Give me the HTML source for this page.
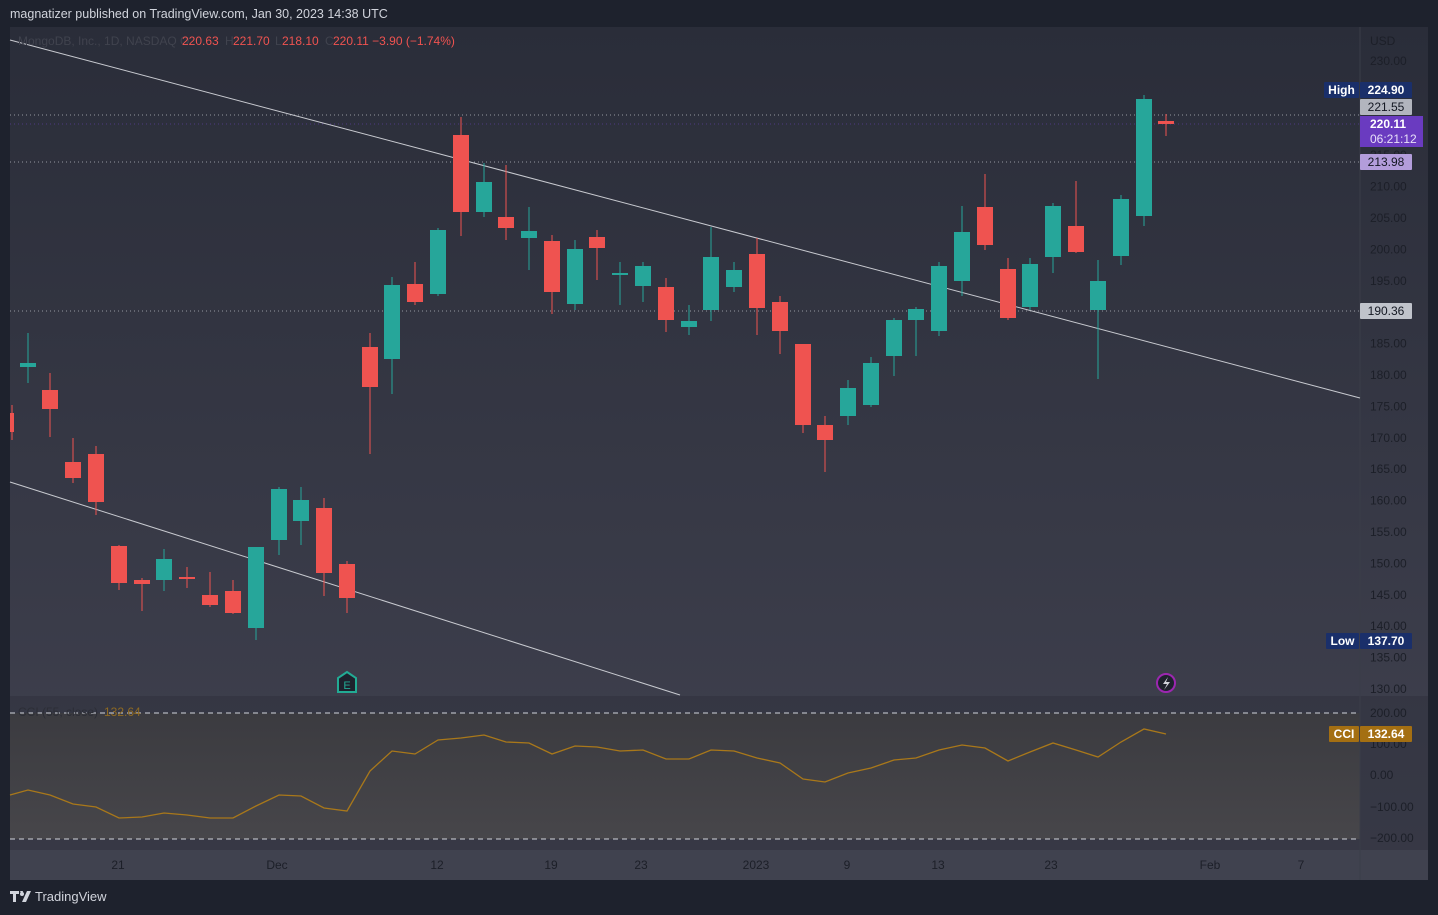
<!DOCTYPE html>
<html><head><meta charset="utf-8"><style>
html,body{margin:0;padding:0;background:#1e222d;width:1438px;height:915px;overflow:hidden;font-family:"Liberation Sans",sans-serif}
#top{position:absolute;left:10px;top:7px;color:#d1d4dc;font-size:12.5px}
#bot{position:absolute;left:10px;top:889px;color:#d1d4dc;font-size:13px;display:flex;align-items:center;gap:3px}
svg{position:absolute;left:0;top:0}
</style></head><body>
<div id="top">magnatizer published on TradingView.com, Jan 30, 2023 14:38 UTC</div>
<svg width="1438" height="915" id="s" font-family="Liberation Sans, sans-serif">
<defs>
<linearGradient id="g1" x1="0" y1="0" x2="0" y2="1"><stop offset="0" stop-color="#2a2d39"/><stop offset="1" stop-color="#414250"/></linearGradient>
<linearGradient id="g2" x1="0" y1="0" x2="0" y2="1"><stop offset="0" stop-color="#3b3b40"/><stop offset="1" stop-color="#47464a"/></linearGradient>
</defs>
<rect x="10" y="27" width="1418" height="853" fill="url(#g1)"/>
<rect x="10" y="696" width="1418" height="154" fill="#2d303b" opacity="0.5"/>
<rect x="10" y="713" width="1350" height="126" fill="url(#g2)"/>
<rect x="10" y="850" width="1418" height="30" fill="#40424f"/>
<line x1="1360" y1="27" x2="1360" y2="880" stroke="#3a3d48"/>
<g id="c"></g>
</svg>
<div id="bot"><svg width="22" height="14" style="position:static"><path d="M0 1h9v3h-3v8h-3v-8h-3z M10 1h3l-1 4z M12 12l5-11h4l-5 11z" fill="#d1d4dc"/><circle cx="12" cy="4" r="2" fill="#d1d4dc"/></svg>TradingView</div>
<script>
var ns="http://www.w3.org/2000/svg",G=document.getElementById('c');
function el(t,a,txt){var e=document.createElementNS(ns,t);for(var k in a)e.setAttribute(k,a[k]);if(txt!=null)e.textContent=txt;G.appendChild(e);return e;}
el('line',{x1:10,y1:115,x2:1360,y2:115,stroke:'#9598a1','stroke-dasharray':'1 3'});
el('line',{x1:10,y1:124,x2:1360,y2:124,stroke:'#5c3fa0','stroke-dasharray':'1 3','opacity':0.7});
el('line',{x1:10,y1:162,x2:1360,y2:162,stroke:'#9598a1','stroke-dasharray':'1 3'});
el('line',{x1:10,y1:311,x2:1360,y2:311,stroke:'#9598a1','stroke-dasharray':'1 3'});
el('line',{x1:10,y1:40,x2:1360,y2:398,stroke:'#c8cad0','stroke-width':1});
el('line',{x1:10,y1:482,x2:680,y2:695,stroke:'#c8cad0','stroke-width':1});
var C=[[12,'r',413,432,405,440],[28,'g',363,367,333,383],[50,'r',390,409,373,437],[73,'r',462,478,438,483],[96,'r',454,502,446,515],[119,'r',546,583,545,590],[142,'r',580,584,578,611],[164,'g',559,580,549,591],[187,'r',577,579,567,588],[210,'r',595,605,572,607],[233,'r',591,613,580,614],[256,'g',547,628,547,640],[279,'g',489,540,487,555],[301,'g',500,521,487,545],[324,'r',508,573,498,596],[347,'r',564,598,561,613],[370,'r',347,387,333,454],[392,'g',285,359,277,394],[415,'r',284,302,262,305],[438,'g',230,294,228,296],[461,'r',135,212,117,236],[484,'g',182,212,163,217],[506,'r',217,228,165,240],[529,'g',231,238,207,270],[552,'r',241,292,235,314],[575,'g',249,304,240,310],[597,'r',237,248,230,280],[620,'g',273,275,262,305],[643,'g',266,286,262,302],[666,'r',287,320,278,332],[689,'g',321,327,305,335],[711,'g',257,310,227,321],[734,'g',270,287,262,292],[757,'r',254,308,238,335],[780,'r',302,331,296,354],[803,'r',344,425,344,433],[825,'r',425,440,416,472],[848,'g',388,416,380,425],[871,'g',363,405,357,407],[894,'g',320,356,318,376],[916,'g',309,320,307,356],[939,'g',266,331,262,336],[962,'g',232,281,206,296],[985,'r',207,245,174,250],[1008,'r',269,318,258,320],[1030,'g',264,307,258,310],[1053,'g',206,257,203,273],[1076,'r',226,252,181,253],[1098,'g',281,310,260,379],[1121,'g',199,256,195,265],[1144,'g',99,216,95,226],[1166,'r',121,124,114,136]];
C.forEach(function(c){var col=c[1]=='g'?'#26a69a':'#ef5350';var x=c[0];
el('line',{x1:x,y1:c[4],x2:x,y2:c[5],stroke:col});
var w=16,l=x-8;if(x<15){l=10;w=4;}
el('rect',{x:l,y:c[2],width:w,height:Math.max(2,c[3]-c[2]),fill:col});});
el('line',{x1:10,y1:713,x2:1360,y2:713,stroke:'#d1d4dc','stroke-dasharray':'5 4'});
el('line',{x1:10,y1:839,x2:1360,y2:839,stroke:'#d1d4dc','stroke-dasharray':'5 4'});
var P=[[10,795],[28,790],[50,795],[73,804],[96,807],[119,818],[142,817],[164,813],[187,815],[210,818],[233,818],[256,806],[279,795],[301,796],[324,808],[347,811],[370,771],[392,751],[415,754],[438,740],[461,738],[484,735],[506,742],[529,743],[552,754],[575,746],[597,747],[620,751],[643,750],[666,759],[689,759],[711,750],[734,751],[757,758],[780,763],[803,779],[825,782],[848,773],[871,768],[894,760],[916,758],[939,750],[962,745],[985,748],[1008,761],[1030,752],[1053,743],[1076,750],[1098,757],[1121,742],[1144,729],[1166,734]];
el('polyline',{points:P.map(function(p){return p.join(',')}).join(' '),fill:'none',stroke:'#a9781a','stroke-width':1.3});
var ax='#1c1f28';
el('text',{x:1370,y:45,fill:ax,'font-size':12},'USD');
for(var p=230;p>=130;p-=5){var y=61+(230-p)*6.28;el('text',{x:1370,y:y+4,fill:ax,'font-size':12},p.toFixed(2));}
[['200.00',713],['100.00',744],['0.00',775],['\u2212100.00',807],['\u2212200.00',838]].forEach(function(a){el('text',{x:1370,y:a[1]+4,fill:ax,'font-size':12},a[0]);});
[['21',118],['Dec',277],['12',437],['19',551],['23',641],['2023',756],['9',847],['13',938],['23',1051],['Feb',1210],['7',1301]].forEach(function(a){el('text',{x:a[1],y:869,fill:ax,'font-size':12,'text-anchor':'middle'},a[0]);});
el('text',{x:18,y:45,fill:'#40434e','font-size':12},'MongoDB, Inc., 1D, NASDAQ  O');
el('text',{x:182,y:45,fill:'#f05350','font-size':12},'220.63');
el('text',{x:225,y:45,fill:'#40434e','font-size':12},'H');
el('text',{x:233,y:45,fill:'#f05350','font-size':12},'221.70');
el('text',{x:275,y:45,fill:'#40434e','font-size':12},'L');
el('text',{x:282,y:45,fill:'#f05350','font-size':12},'218.10');
el('text',{x:325,y:45,fill:'#40434e','font-size':12},'C');
el('text',{x:333,y:45,fill:'#f05350','font-size':12},'220.11  \u22123.90 (\u22121.74%)');
el('text',{x:18,y:716,fill:'#2c2e36','font-size':12},'CCI (55, close)');
el('text',{x:104,y:716,fill:'#8f6a22','font-size':12},'132.64');
function tag(x,y,w,h,bg,txt,fg,bold){el('rect',{x:x,y:y,width:w,height:h,fill:bg,rx:1});el('text',{x:x+w/2,y:y+h/2+4,fill:fg,'font-size':12,'text-anchor':'middle','font-weight':bold?'bold':'normal'},txt);}
tag(1324,82,35,16,'#1a2f6a','High','#fff',1);tag(1360,82,52,16,'#1a2f6a','224.90','#fff',1);
tag(1360,99,52,16,'#b2b5be','221.55','#131722');
el('rect',{x:1360,y:116,width:63,height:31,fill:'#6a3bc0'});
el('text',{x:1370,y:128,fill:'#fff','font-size':12,'font-weight':'bold'},'220.11');
el('text',{x:1370,y:143,fill:'#e8e0f8','font-size':12},'06:21:12');
tag(1360,154,52,16,'#b39ddb','213.98','#131722');
tag(1360,303,52,16,'#c0c3cb','190.36','#131722');
tag(1326,633,33,16,'#1a2f6a','Low','#fff',1);tag(1360,633,52,16,'#1a2f6a','137.70','#fff',1);
tag(1329,726,30,16,'#a46f12','CCI','#fff',1);tag(1360,726,52,16,'#a46f12','132.64','#fff',1);
el('path',{d:'M338 692 V678 L347 672 L356 678 V692 Z',fill:'#1e222d',stroke:'#22ab94','stroke-width':2});
el('text',{x:347,y:689,fill:'#22ab94','font-size':11,'text-anchor':'middle'},'E');
el('circle',{cx:1166,cy:683,r:9,fill:'#1e222d',stroke:'#9c27b0','stroke-width':2});
el('path',{d:'M1168 677 L1163 684 H1167 L1164 690 L1170 682 H1166 Z',fill:'#d1d4dc'});
</script>
</body></html>
